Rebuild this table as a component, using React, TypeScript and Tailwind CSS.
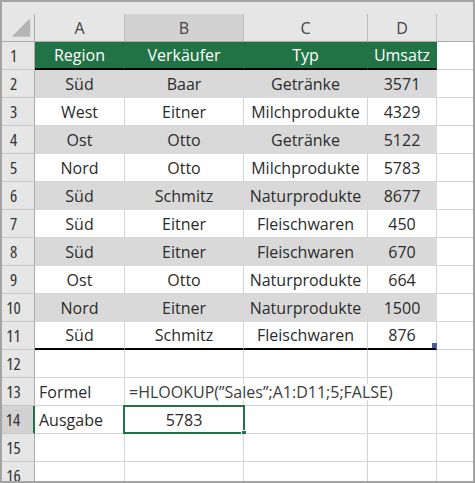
import React from "react";

const COLS = [
  { key: "A", w: "w-[90px]" },
  { key: "B", w: "w-[119px]" },
  { key: "C", w: "w-[124px]" },
  { key: "D", w: "w-[69px]" },
];

const DATA = [
  ["Region", "Verkäufer", "Typ", "Umsatz"],
  ["Süd", "Baar", "Getränke", "3571"],
  ["West", "Eitner", "Milchprodukte", "4329"],
  ["Ost", "Otto", "Getränke", "5122"],
  ["Nord", "Otto", "Milchprodukte", "5783"],
  ["Süd", "Schmitz", "Naturprodukte", "8677"],
  ["Süd", "Eitner", "Fleischwaren", "450"],
  ["Süd", "Eitner", "Fleischwaren", "670"],
  ["Ost", "Otto", "Naturprodukte", "664"],
  ["Nord", "Eitner", "Naturprodukte", "1500"],
  ["Süd", "Schmitz", "Fleischwaren", "876"],
];

const font = "font-['Open_Sans','Liberation_Sans',sans-serif]";

function RowHeader({ n, selected }: { n: number; selected?: boolean }) {
  return (
    <div
      className={`w-[33px] shrink-0 h-full flex items-center justify-center pr-[9px] text-[17px] text-[#333] border-b border-b-[#c6c6c6] ${
        selected ? "bg-[#d2d2d2] border-r-2 border-r-[#217346]" : "bg-[#e6e6e6] border-r border-r-[#ababab]"
      } [font-stretch:80%]`}
    >
      {n}
    </div>
  );
}

function Cell({
  w,
  children,
  kind,
  align = "center",
}: {
  w: string;
  children?: React.ReactNode;
  kind: "green" | "gray" | "white" | "plainLast";
  align?: "center" | "left";
}) {
  let cls = "";
  if (kind === "green") cls = "bg-[#217346] text-white border-r border-r-[#217346] border-b-2 border-b-black";
  if (kind === "gray") cls = "bg-[#d9d9d9] text-[#2b2b2b] border-r border-r-[#d9d9d9] border-b border-b-[#d9d9d9]";
  if (kind === "white") cls = "bg-white text-[#2b2b2b] border-r border-r-[#d4d4d4] border-b border-b-[#d4d4d4]";
  if (kind === "plainLast") cls = "bg-white text-[#2b2b2b] border-r border-r-[#d4d4d4] border-b-2 border-b-black";
  return (
    <div
      className={`${w} shrink-0 h-full flex items-center whitespace-nowrap ${
        align === "center" ? "justify-center" : "justify-start pl-[4px]"
      } ${cls}`}
    >
      {children}
    </div>
  );
}

function EmptyTail() {
  return <div className="flex-1 h-full border-b border-b-[#d4d4d4] bg-white" />;
}

export default function App() {
  return (
    <div className={`w-[475px] h-[483px] border-2 border-[#a3a3a3] bg-white overflow-hidden ${font} text-[16px] leading-none`}>
      {/* strip above column headers */}
      <div className="h-[12px] bg-[#e6e6e6]" />

      {/* column headers */}
      <div className="h-[28px] flex bg-[#e6e6e6] border-b border-b-[#ababab]">
        <div className="w-[33px] shrink-0 border-r border-r-[#ababab] flex items-start">
          <svg width="33" height="27" viewBox="0 0 33 27">
            <polygon points="10,23 29,4 29,23" fill="#b4b4b4" />
          </svg>
        </div>
        {COLS.map((c) => (
          <div
            key={c.key}
            className={`${c.w} shrink-0 flex items-center justify-center text-[#444] border-r border-r-[#bdbdbd] ${
              c.key === "B" ? "bg-[#d2d2d2]" : ""
            }`}
          >
            {c.key}
          </div>
        ))}
        <div className="flex-1" />
      </div>

      {/* table rows */}
      {DATA.map((row, i) => {
        const n = i + 1;
        const kind = n === 1 ? "green" : n === 11 ? "plainLast" : n % 2 === 0 ? "gray" : "white";
        return (
          <div key={n} className="h-[28px] flex relative">
            <RowHeader n={n} />
            {row.map((v, j) => (
              <Cell key={j} w={COLS[j].w} kind={kind}>
                {v}
              </Cell>
            ))}
            <EmptyTail />
            {n === 11 && <div className="absolute left-[430px] top-[21px] w-[5px] h-[5px] bg-[#4a5cad]" />}
          </div>
        );
      })}

      {/* rows 12-16 */}
      {[12, 13, 14, 15, 16].map((n) => (
        <div key={n} className="h-[28px] flex relative">
          <RowHeader n={n} selected={n === 14} />
          <Cell w={COLS[0].w} kind="white" align="left">
            {n === 13 ? "Formel" : n === 14 ? "Ausgabe" : null}
          </Cell>
          <Cell w={COLS[1].w} kind="white" align={n === 13 ? "left" : "center"}>
            {n === 13 ? (
              <span className="relative z-10 bg-white pr-1 text-[#3c3c3c]">=HLOOKUP(”Sales”;A1:D11;5;FALSE)</span>
            ) : n === 14 ? (
              "5783"
            ) : null}
          </Cell>
          <Cell w={COLS[2].w} kind="white" />
          <Cell w={COLS[3].w} kind="white" />
          <EmptyTail />
          {n === 14 && (
            <>
              <div className="absolute left-[121px] top-[-1px] w-[122px] h-[29px] border-2 border-[#217346] pointer-events-none" />
              <div className="absolute left-[239px] top-[24px] w-[6px] h-[6px] bg-[#217346] border border-white" />
            </>
          )}
        </div>
      ))}
    </div>
  );
}
